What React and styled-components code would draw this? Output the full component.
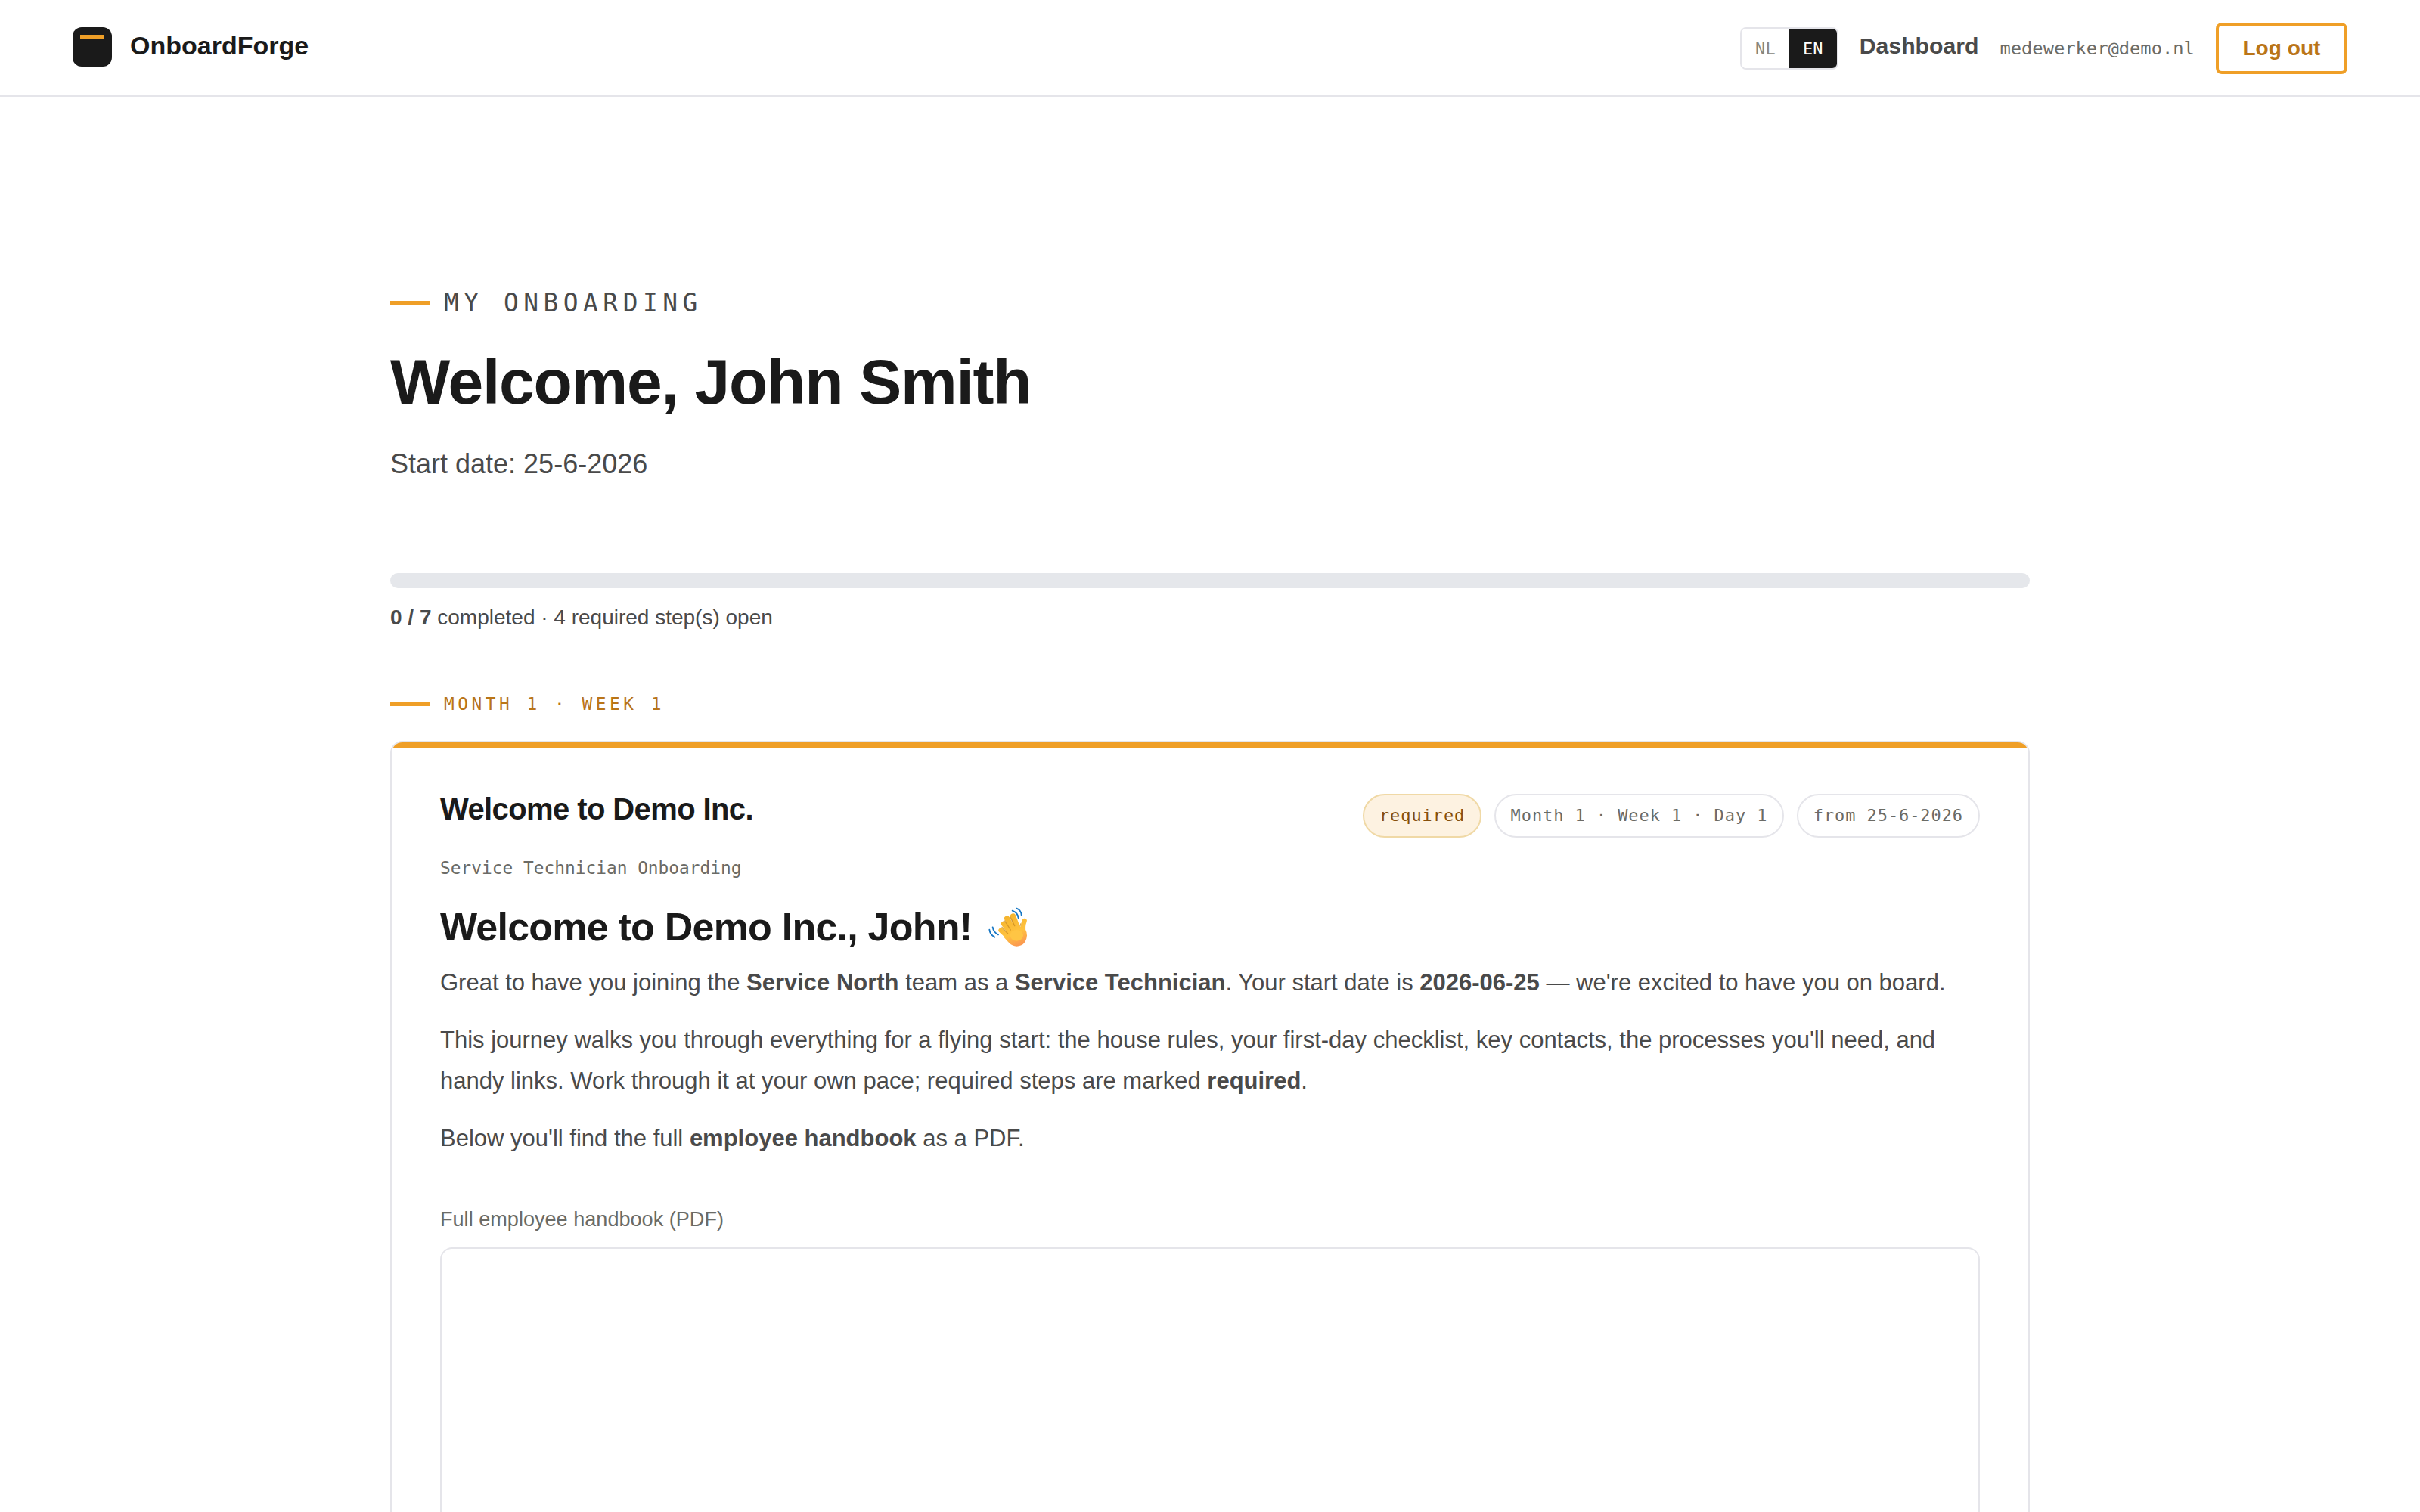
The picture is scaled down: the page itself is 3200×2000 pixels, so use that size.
import styled, { createGlobalStyle } from "styled-components";

const pills = [
  { text: "required", accent: true },
  { text: "Month 1 · Week 1 · Day 1" },
  { text: "from 25-6-2026" },
];

export default function App() {
  return (
    <Page>
      <GlobalStyle />
      <Header>
        <Brand>
          <Logo>
            <LogoBar />
          </Logo>
          <BrandName>OnboardForge</BrandName>
        </Brand>
        <Nav>
          <LangSwitch>
            <Lang>NL</Lang>
            <Lang $active>EN</Lang>
          </LangSwitch>
          <NavLink>Dashboard</NavLink>
          <Email>medewerker@demo.nl</Email>
          <LogoutBtn>Log out</LogoutBtn>
        </Nav>
      </Header>

      <Main>
        <Eyebrow>My onboarding</Eyebrow>
        <Title>Welcome, John Smith</Title>
        <Lead>Start date: 25-6-2026</Lead>

        <Progress />
        <ProgressText>
          <b>0 / 7</b> completed · 4 required step(s) open
        </ProgressText>

        <PeriodLabel>Month 1 · Week 1</PeriodLabel>

        <Card>
          <CardAccent />
          <CardBody>
            <CardHead>
              <CardTitle>Welcome to Demo Inc.</CardTitle>
              <PillList>
                {pills.map((pill) => (
                  <Pill key={pill.text} $accent={pill.accent}>
                    {pill.text}
                  </Pill>
                ))}
              </PillList>
            </CardHead>
            <CardMeta>Service Technician Onboarding</CardMeta>

            <ContentTitle>
              Welcome to Demo Inc., John!
              <WavingHand />
            </ContentTitle>
            <Text>
              Great to have you joining the <b>Service North</b> team as a{" "}
              <b>Service Technician</b>. Your start date is <b>2026-06-25</b> —
              we're excited to have you on board.
            </Text>
            <Text>
              This journey walks you through everything for a flying start: the
              house rules, your first-day checklist, key contacts, the processes
              you'll need, and handy links. Work through it at your own pace;
              required steps are marked <b>required</b>.
            </Text>
            <Text>
              Below you'll find the full <b>employee handbook</b> as a PDF.
            </Text>

            <FileLabel>Full employee handbook (PDF)</FileLabel>
            <FileFrame />
          </CardBody>
        </Card>
      </Main>
    </Page>
  );
}

const WavingHand = () => (
  <HandSvg viewBox="0 0 156 156" fill="none" strokeLinecap="round">
    <defs>
      <linearGradient id="skin" x1="60" y1="40" x2="110" y2="154" gradientUnits="userSpaceOnUse">
        <stop offset="0" stopColor="#f5b52e" />
        <stop offset="0.6" stopColor="#ffc23f" />
        <stop offset="1" stopColor="#fb9a50" />
      </linearGradient>
    </defs>
    <g stroke="url(#skin)">
      <path d="M98 36 L118 88" strokeWidth="22" />
      <path d="M74 45 L104 100" strokeWidth="22" />
      <path d="M61 66 L96 112" strokeWidth="21" />
      <path d="M50 92 L98 136" strokeWidth="20" />
      <path d="M143 54 Q134 76 140 104" strokeWidth="19" />
    </g>
    <path
      d="M90 76 L126 76 Q154 86 153 112 Q149 154 112 155 Q96 155 82 142 L62 120 Z"
      fill="url(#skin)"
    />
    <ellipse cx="112" cy="112" rx="26" ry="22" fill="#ffc544" />
    <g stroke="#c98a20" strokeWidth="4" opacity="0.75">
      <path d="M86 38 L104 74" />
      <path d="M65 54 L88 90" />
      <path d="M54 79 L77 105" />
      <path d="M126 74 L128 66" />
    </g>
    <g stroke="#1777c4" strokeWidth="5.5">
      <path d="M112 5 Q130 12 131 31" />
      <path d="M95 14 Q117 22 119 43" />
      <path d="M4 89 Q6 109 25 119" />
      <path d="M17 79 Q20 99 39 109" />
    </g>
  </HandSvg>
);

const GlobalStyle = createGlobalStyle`
  * {
    box-sizing: border-box;
  }

  body {
    margin: 0;
    background: #ffffff;
    color: #4a4a4a;
    font-family: "Liberation Sans", Arial, sans-serif;
  }
`;

const mono = `font-family: "DejaVu Sans Mono", monospace;`;

const Page = styled.div`
  height: 100vh;
  overflow: hidden;
`;

const Header = styled.header`
  display: flex;
  justify-content: space-between;
  align-items: flex-start;
  height: 128px;
  padding: 30px 96px 0;
  border-bottom: 2px solid #e5e5ea;
`;

const Brand = styled.div`
  display: flex;
  align-items: center;
  gap: 24px;
  margin-top: 6px;
`;

const Logo = styled.div`
  width: 52px;
  height: 52px;
  padding: 10px;
  background: #1a1a1a;
  border-radius: 12px;
`;

const LogoBar = styled.div`
  height: 6px;
  background: #ef9f27;
`;

const BrandName = styled.div`
  font-weight: bold;
  font-size: 34px;
  line-height: 52px;
  margin-top: -4px;
  color: #1a1a1a;
`;

const Nav = styled.nav`
  display: flex;
  align-items: center;
  gap: 28px;
  height: 68px;
`;

const LangSwitch = styled.div`
  display: flex;
  height: 56px;
  border: 2px solid #e5e5ea;
  border-radius: 8px;
  overflow: hidden;
`;

const Lang = styled.div`
  ${mono}
  padding: 0 18px;
  font-size: 21.93px;
  line-height: 54px;
  letter-spacing: 0.24px;
  color: ${({ $active }) => ($active ? "#ffffff" : "#888780")};
  background: ${({ $active }) => ($active ? "#1a1a1a" : "#ffffff")};
`;

const NavLink = styled.div`
  margin-top: -6px;
  font-weight: bold;
  font-size: 30.2px;
  line-height: 48px;
`;

const Email = styled.div`
  ${mono}
  font-size: 23.75px;
  line-height: 40px;
  color: #6b6b66;
`;

const LogoutBtn = styled.button`
  height: 68px;
  padding: 0 31.6px;
  background: #ffffff;
  border: 4px solid #ef9f27;
  border-radius: 8px;
  font-family: inherit;
  font-weight: bold;
  font-size: 28.1px;
  line-height: 60px;
  color: #ba7517;
`;

const Main = styled.main`
  width: 2168px;
  margin: 0 auto;
  padding-top: 243px;
`;

const Eyebrow = styled.div`
  ${mono}
  display: flex;
  align-items: center;
  gap: 19px;
  font-size: 32.88px;
  line-height: 60px;
  letter-spacing: 6.5px;
  text-transform: uppercase;

  &::before {
    content: "";
    width: 52px;
    height: 6px;
    background: #ef9f27;
  }
`;

const PeriodLabel = styled(Eyebrow)`
  margin-top: 72px;
  font-size: 22.83px;
  line-height: 40px;
  letter-spacing: 4.5px;
  color: #ba7517;
`;

const Title = styled.h1`
  margin: 28px 0 33px;
  font-size: 84px;
  line-height: 92px;
  letter-spacing: -0.015em;
  color: #1a1a1a;
`;

const Lead = styled.div`
  font-size: 36px;
  line-height: 60px;
`;

const Progress = styled.div`
  height: 20px;
  margin-top: 114px;
  background: #e5e7eb;
  border-radius: 10px;
`;

const ProgressText = styled.div`
  margin-top: 17px;
  font-size: 28px;
  line-height: 44px;
`;

const Card = styled.section`
  margin-top: 29px;
  border: 2px solid #e5e5ea;
  border-radius: 16px;
  overflow: hidden;
`;

const CardAccent = styled.div`
  height: 8px;
  background: #ef9f27;
`;

const CardBody = styled.div`
  padding: 54px 64px 64px;
`;

const CardHead = styled.div`
  display: flex;
  justify-content: space-between;
  align-items: flex-start;
`;

const CardTitle = styled.h3`
  margin: 0;
  font-size: 40px;
  line-height: 52px;
  letter-spacing: -0.015em;
  color: #1a1a1a;
`;

const PillList = styled.div`
  display: flex;
  gap: 16.4px;
  margin-top: 6px;
`;

const Pill = styled.span`
  ${mono}
  height: 58px;
  padding: 0 20px;
  border: 2px solid ${({ $accent }) => ($accent ? "#f0d9a6" : "#e5e5ea")};
  border-radius: 29px;
  background: ${({ $accent }) => ($accent ? "#fdf2e1" : "#ffffff")};
  font-size: 21.93px;
  line-height: 54px;
  letter-spacing: 0.96px;
  color: ${({ $accent }) => ($accent ? "#854f0b" : "#6b6b66")};
`;

const CardMeta = styled.div`
  ${mono}
  margin-top: 20px;
  font-size: 22.83px;
  line-height: 40px;
  color: #6b6b66;
`;

const ContentTitle = styled.h2`
  display: flex;
  align-items: center;
  gap: 22px;
  margin: 26px 0 15px;
  font-size: 52px;
  line-height: 64px;
  letter-spacing: -0.015em;
  color: #1a1a1a;
`;

const HandSvg = styled.svg`
  width: 52px;
  height: 52px;
`;

const Text = styled.p`
  margin: 0 0 22px;
  font-size: 31px;
  line-height: 54px;
`;

const FileLabel = styled.div`
  margin-top: 58px;
  font-size: 27.1px;
  line-height: 44px;
  color: #6b6b66;
`;

const FileFrame = styled.div`
  height: 1040px;
  margin-top: 15px;
  border: 2px solid #e5e5ea;
  border-radius: 16px;
`;
